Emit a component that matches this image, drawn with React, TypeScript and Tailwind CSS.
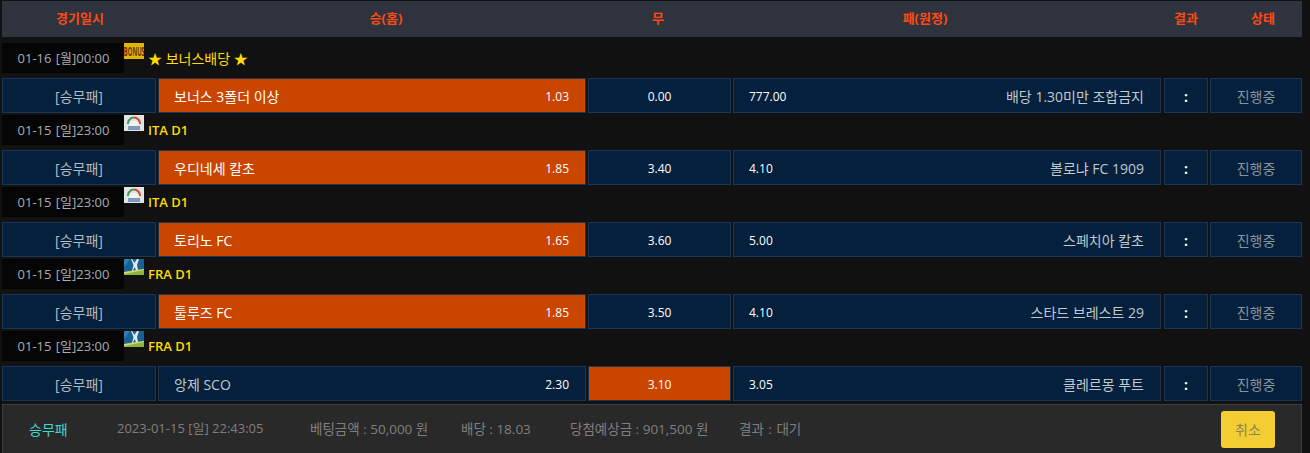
import React from 'react';

type League = 'bonus' | 'ita' | 'fra';

interface Bet {
  date: string;
  league: League;
  leagueName: string;
  home: string;
  homeOdds: string;
  draw: string;
  awayOdds: string;
  away: string;
  pick: 'home' | 'draw';
}

const bets: Bet[] = [
  { date: '01-16 [월]00:00', league: 'bonus', leagueName: '★ 보너스배당 ★', home: '보너스 3폴더 이상', homeOdds: '1.03', draw: '0.00', awayOdds: '777.00', away: '배당 1.30미만 조합금지', pick: 'home' },
  { date: '01-15 [일]23:00', league: 'ita', leagueName: 'ITA D1', home: '우디네세 칼초', homeOdds: '1.85', draw: '3.40', awayOdds: '4.10', away: '볼로냐 FC 1909', pick: 'home' },
  { date: '01-15 [일]23:00', league: 'ita', leagueName: 'ITA D1', home: '토리노 FC', homeOdds: '1.65', draw: '3.60', awayOdds: '5.00', away: '스페치아 칼초', pick: 'home' },
  { date: '01-15 [일]23:00', league: 'fra', leagueName: 'FRA D1', home: '툴루즈 FC', homeOdds: '1.85', draw: '3.50', awayOdds: '4.10', away: '스타드 브레스트 29', pick: 'home' },
  { date: '01-15 [일]23:00', league: 'fra', leagueName: 'FRA D1', home: '앙제 SCO', homeOdds: '2.30', draw: '3.10', awayOdds: '3.05', away: '클레르몽 푸트', pick: 'draw' },
];

const LeagueIcon: React.FC<{ league: League }> = ({ league }) => {
  if (league === 'bonus') {
    return (
      <div className="w-5 h-4 bg-[#dcb800] flex items-center justify-center overflow-hidden shrink-0">
        <span className="text-[13px] leading-none font-bold text-[#6e2c0c] scale-x-[0.45] whitespace-nowrap">BONUS</span>
      </div>
    );
  }
  if (league === 'ita') {
    return (
      <svg width="20" height="16" viewBox="0 0 20 16" className="shrink-0">
        <rect width="20" height="16" fill="#dfe5e4" />
        <path d="M4 9 A6 6 0 0 1 10 2.5" stroke="#4c9a5c" strokeWidth="2.2" fill="none" />
        <path d="M10 2.5 A6 6 0 0 1 16 9" stroke="#c9533a" strokeWidth="2.2" fill="none" />
        <ellipse cx="10" cy="9" rx="5" ry="3" fill="#f2f4f2" />
        <rect x="4" y="11" width="12" height="4" fill="#7e97bb" />
      </svg>
    );
  }
  return (
    <svg width="20" height="16" viewBox="0 0 20 16" className="shrink-0">
      <rect width="20" height="16" fill="#1a5e92" />
      <path d="M0 0 H6 L0 8 Z" fill="#2f7fb0" />
      <path d="M0 13 L20 10 V16 H0 Z" fill="#8fb23a" />
      <path d="M0 13 L20 10 V11 L0 15 Z" fill="#d2dc6a" />
      <path d="M8 0 L10.5 4 L13 0 H15 L13 6 L14 11 H12 L10.5 8 L9 12 H8 L9.5 6 L7 0 Z" fill="#e2eaf2" />
    </svg>
  );
};

const Cell: React.FC<{ className?: string; active?: boolean; children: React.ReactNode }> = ({ className = '', active, children }) => (
  <div className={`h-[35px] pt-[2px] border border-[#1c3553] flex items-center ${active ? 'bg-[#c94500] text-white' : 'bg-[#04203c]'} ${className}`}>
    {children}
  </div>
);

const BetRow: React.FC<{ bet: Bet }> = ({ bet }) => (
  <>
    <div className="flex h-[30px] pl-[2px]">
      <div className="w-[122px] h-[30px] bg-[#050505] text-[#a5acb3] flex items-center justify-center pt-[2px] pl-[1px] [word-spacing:1px]">{bet.date}</div>
      <LeagueIcon league={bet.league} />
      <span className={`ml-1 leading-[30px] text-[#ffdc00] ${bet.league === 'bonus' ? 'text-[14px] mt-[1px]' : 'font-semibold'}`}>{bet.leagueName}</span>
    </div>
    <div className="flex h-[35px] mt-[5px] pl-[2px] w-[1302px] text-[14px]">
      <Cell className="w-[154px] justify-center text-[#b5bcc4]">[승무패]</Cell>
      <Cell active={bet.pick === 'home'} className={`w-[428px] ml-[2px] justify-between pl-[15px] pr-[16px] ${bet.pick === 'home' ? '' : 'text-[#c2c8ce]'}`}>
        <span>{bet.home}</span>
        <span className="text-white text-[12px]">{bet.homeOdds}</span>
      </Cell>
      <Cell active={bet.pick === 'draw'} className="w-[143px] ml-[2px] justify-center text-white text-[12px]">{bet.draw}</Cell>
      <Cell className="w-[428px] ml-[2px] justify-between pl-[15px] pr-[16px] text-[#c2c8ce]">
        <span className="text-white text-[12px]">{bet.awayOdds}</span>
        <span>{bet.away}</span>
      </Cell>
      <Cell className="w-[44px] ml-[3px] justify-center text-white font-bold">:</Cell>
      <Cell className="w-[92px] ml-[2px] justify-center text-[#8b939b]">진행중</Cell>
    </div>
  </>
);

export default function App(): React.ReactNode {
  return (
    <div className="w-[1310px] h-[453px] overflow-hidden bg-[#111111] text-[13px] font-['Open_Sans','Noto_Sans_CJK_KR',sans-serif]">
      <div className="pt-[1px] pl-[2px]">
        <div className="w-[1300px] h-[36px] bg-[#2f333e] flex items-center font-bold text-[#ff4a12]">
          <div className="w-[156px] text-center">경기일시</div>
          <div className="w-[456px] text-center">승(홈)</div>
          <div className="w-[88px] text-center">무</div>
          <div className="w-[446px] text-center">패(원정)</div>
          <div className="w-[76px] text-center">결과</div>
          <div className="w-[78px] text-center">상태</div>
        </div>
      </div>
      <div className="mt-[6px] flex flex-col gap-[2px]">
        {bets.map((bet, i) => (
          <div key={i}>
            <BetRow bet={bet} />
          </div>
        ))}
      </div>
      <div className="mt-[3px] ml-[2px] w-[1300px] h-[49px] bg-[#292929] border border-[#3e3e3e] border-b-0 flex items-center text-[#7f7f7f] text-[13.5px]">
        <span className="ml-[26px] w-[88px] text-[#3fd8cf] text-[14px]">승무패</span>
        <span className="w-[193px] text-[13px]">2023-01-15 [일] 22:43:05</span>
        <span className="w-[151px]">베팅금액 : 50,000 원</span>
        <span className="w-[109px]">배당 : 18.03</span>
        <span className="w-[169px]">당첨예상금 : 901,500 원</span>
        <span className="[word-spacing:1px]">결과 : 대기</span>
        <button className="ml-auto mr-[26px] w-[54px] h-[37px] rounded-[3px] bg-[#f4cd33] text-[#8a8456] text-[14px]">취소</button>
      </div>
    </div>
  );
}
